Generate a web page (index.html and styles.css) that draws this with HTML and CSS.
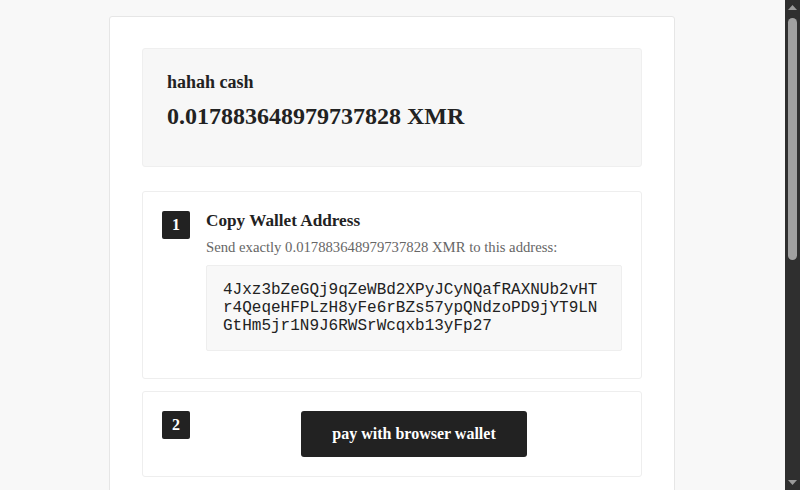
FILE: index.html
```html
<!DOCTYPE html>
<html lang="en">
<head>
<meta charset="utf-8">
<title>Checkout</title>
<link rel="stylesheet" href="styles.css">
</head>
<body>
<div class="page">
  <main class="card">
    <section class="summary">
      <h2 class="summary-name">hahah cash</h2>
      <div class="summary-amount">0.017883648979737828 XMR</div>
    </section>

    <section class="step">
      <div class="badge">1</div>
      <div class="step-body">
        <h3 class="step-title">Copy Wallet Address</h3>
        <p class="step-note">Send exactly 0.017883648979737828 XMR to this address:</p>
        <div class="address">4Jxz3bZeGQj9qZeWBd2XPyJCyNQafRAXNUb2vHTr4QeqeHFPLzH8yFe6rBZs57ypQNdzoPD9jYT9LNGtHm5jr1N9J6RWSrWcqxb13yFp27</div>
      </div>
    </section>

    <section class="step">
      <div class="badge">2</div>
      <div class="step-body step-center">
        <button class="pay-btn" type="button">pay with browser wallet</button>
      </div>
    </section>
  </main>
</div>

<div class="scrollbar" aria-hidden="true">
  <svg class="sb-arrow" width="15" height="15" viewBox="0 0 15 15"><polygon points="3,10 12,10 7.5,5" fill="#9a9a9a"/></svg>
  <div class="sb-track">
    <div class="sb-thumb"></div>
  </div>
  <svg class="sb-arrow" width="15" height="15" viewBox="0 0 15 15"><polygon points="3,5 12,5 7.5,10" fill="#9a9a9a"/></svg>
</div>
</body>
</html>
```
FILE: styles.css
```css
html {
  background: #f8f8f8;
}

body {
  margin: 0;
  background: #f8f8f8;
  color: #222;
  font-family: "Liberation Serif", "Times New Roman", serif;
}

.page {
  box-sizing: border-box;
  padding: 16px 16px 16px 0;
}

.card {
  box-sizing: border-box;
  width: 566px;
  min-height: 900px;
  margin: 0 auto;
  padding: 31px 32px;
  background: #fff;
  border: 1px solid #e6e6e6;
  border-radius: 3px;
  display: flex;
  flex-direction: column;
  gap: 12px;
}

.summary {
  background: #f7f7f7;
  border: 1px solid #efefef;
  border-radius: 3px;
  padding: 23px 24px 36px;
  margin-bottom: 12px;
}

.summary-name {
  margin: 0 0 10px;
  font-size: 18px;
  font-weight: bold;
  color: #222;
}

.summary-amount {
  font-size: 24px;
  font-weight: bold;
  color: #222;
}

.step {
  border: 1px solid #eeeeee;
  border-radius: 3px;
  padding: 19px;
  display: flex;
  gap: 16px;
  align-items: flex-start;
}

.badge {
  flex: none;
  width: 28px;
  height: 28px;
  background: #222;
  color: #fff;
  border-radius: 2px;
  font-weight: bold;
  font-size: 16px;
  display: flex;
  align-items: center;
  justify-content: center;
}

.step-body {
  flex: 1;
  min-width: 0;
}

.step-center {
  display: flex;
  justify-content: center;
}

.step-title {
  margin: 0 0 8px;
  font-size: 17.2px;
  font-weight: bold;
  color: #222;
}

.step-note {
  margin: 0 0 9px;
  font-size: 14.7px;
  color: #666;
}

.address {
  background: #f8f8f8;
  border: 1px solid #eeeeee;
  border-radius: 2px;
  padding: 15px 16px;
  margin-bottom: 8px;
  font-family: "Liberation Mono", "Courier New", monospace;
  font-size: 16px;
  line-height: 18px;
  color: #222;
  word-break: break-all;
}

.pay-btn {
  background: #222;
  color: #fff;
  border: 0;
  border-radius: 3px;
  padding: 14px 31px;
  font-family: "Liberation Serif", "Times New Roman", serif;
  font-size: 16px;
  font-weight: bold;
  cursor: pointer;
}

/* painted viewport scrollbar */
.scrollbar {
  position: fixed;
  top: 0;
  right: 0;
  bottom: 0;
  width: 15px;
  background: #2f2f2f;
  display: flex;
  flex-direction: column;
}

.sb-arrow {
  flex: none;
  display: block;
}

.sb-track {
  flex: 1;
  padding: 3px 3px 0;
}

.sb-thumb {
  width: 9px;
  height: 242px;
  background: #a0a0a0;
  border-radius: 5px;
}
```
